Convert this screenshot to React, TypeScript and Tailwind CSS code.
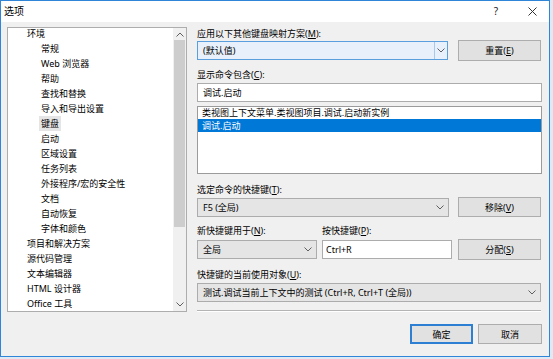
import React from "react";

const treeItems: [string, number][] = [
  ["环境", 0],
  ["常规", 1],
  ["Web 浏览器", 1],
  ["帮助", 1],
  ["查找和替换", 1],
  ["导入和导出设置", 1],
  ["键盘", 1],
  ["启动", 1],
  ["区域设置", 1],
  ["任务列表", 1],
  ["外接程序/宏的安全性", 1],
  ["文档", 1],
  ["自动恢复", 1],
  ["字体和颜色", 1],
  ["项目和解决方案", 0],
  ["源代码管理", 0],
  ["文本编辑器", 0],
  ["HTML 设计器", 0],
  ["Office 工具", 0],
];

const Acc = ({ k }: { k: string }) => (
  <>
    (<span className="underline">{k}</span>)
  </>
);

const Chevron = ({ up = false }: { up?: boolean }) => (
  <svg width="8" height="5" viewBox="0 0 8 5" className="shrink-0">
    <path
      d={up ? "M0.5 4.5 L4 1 L7.5 4.5" : "M0.5 0.5 L4 4 L7.5 0.5"}
      fill="none"
      stroke="#5f5f5f"
      strokeWidth="1"
    />
  </svg>
);

const Combo = ({
  text,
  className = "",
}: {
  text: string;
  className?: string;
}) => (
  <div
    className={`flex h-[19px] items-center border border-[#acacac] bg-[#e5e5e5] pl-[5px] pr-[4px] ${className}`}
  >
    <span className="flex-1 truncate">{text}</span>
    <Chevron />
  </div>
);

const Btn = ({
  children,
  primary = false,
  className = "",
}: {
  children: React.ReactNode;
  primary?: boolean;
  className?: string;
}) => (
  <div
    className={`flex items-center justify-center bg-[#e1e1e1] ${
      primary ? "border-2 border-[#2d7fd3]" : "border border-[#adadad]"
    } ${className}`}
  >
    {children}
  </div>
);

export default function App() {
  return (
    <div className="h-[359px] w-[553px] overflow-hidden bg-[#dfe9f4] font-['Noto_Sans','Noto_Sans_CJK_SC',sans-serif] text-[9px] leading-[13px] text-black">
      <div className="flex h-[357px] w-[550px] flex-col border border-[#2f86d8] bg-[#f0f0f0]">
        {/* title bar */}
        <div className="flex h-[21px] shrink-0 items-center bg-white pl-[3px] text-[10px]">
          <span>选项</span>
          <span className="ml-auto mr-[30px] text-[10px] text-[#222]">?</span>
          <svg width="9" height="9" viewBox="0 0 9 9" className="mr-[12px]">
            <path d="M0.5 0.5 L8.5 8.5 M8.5 0.5 L0.5 8.5" stroke="#333" strokeWidth="1" />
          </svg>
        </div>

        <div className="flex pl-[6px] pt-[5px]">
          {/* tree */}
          <div className="flex h-[285px] w-[180px] shrink-0 overflow-hidden border border-[#adadad] bg-white">
            <div className="flex-1 overflow-hidden">
              <div className="-mt-[2px]">
                {treeItems.map(([name, lvl]) => (
                  <div key={name} className="h-[15px] leading-[15px]">
                    <span
                      className={`inline-block px-[2px] ${
                        lvl === 0 ? "ml-[17px]" : "ml-[31px]"
                      } ${name === "键盘" ? "bg-[#e5e5e5]" : ""}`}
                    >
                      {name}
                    </span>
                  </div>
                ))}
              </div>
            </div>
            <div className="flex w-[13px] flex-col bg-[#f0f0f0]">
              <div className="flex h-[12px] items-center justify-center">
                <Chevron up />
              </div>
              <div className="mx-[1px] h-[187px] bg-[#cdcdcd]" />
              <div className="flex-1" />
              <div className="mb-[1px] flex h-[12px] items-center justify-center">
                <Chevron />
              </div>
            </div>
          </div>

          {/* right panel */}
          <div className="ml-[10px] flex w-[345px] flex-col">
            <div className="h-[13px]">
              应用以下其他键盘映射方案<Acc k="M" />:
            </div>
            <div className="flex h-[21px] items-start">
              <div className="mt-[1px] flex h-[19px] w-[251px] items-center border border-[#5b9ede] bg-[#e8f1fb]">
                <span className="flex-1 pl-[5px]">(默认值)</span>
                <div className="flex h-full w-[13px] items-center justify-center border-l border-[#a9c9ea]">
                  <Chevron />
                </div>
              </div>
              <Btn className="ml-[10px] h-[21px] w-[83px]">
                重置<Acc k="E" />
              </Btn>
            </div>

            <div className="mt-[7px] h-[13px]">
              显示命令包含<Acc k="C" />:
            </div>
            <div className="mt-[2px] flex h-[19px] items-center border border-[#acacac] bg-white pl-[5px]">
              调试.启动
            </div>
            <div className="mt-[4px] h-[68px] border border-[#9b9b9b] bg-white">
              <div className="h-[12px] pl-[4px] leading-[12px]">
                类视图上下文菜单.类视图项目.调试.启动新实例
              </div>
              <div className="h-[13px] bg-[#0078d7] pl-[4px] text-white">调试.启动</div>
            </div>

            <div className="mt-[9px] h-[13px]">
              选定命令的快捷键<Acc k="T" />:
            </div>
            <div className="mt-[1px] flex h-[20px] items-start">
              <Combo text="F5 (全局)" className="mt-[1px] w-[252px]" />
              <Btn className="ml-[9px] h-[20px] w-[83px]">
                移除<Acc k="V" />
              </Btn>
            </div>

            <div className="mt-[7px] flex h-[13px]">
              <div className="w-[125px]">
                新快捷键用于<Acc k="N" />:
              </div>
              <div>
                按快捷键<Acc k="P" />:
              </div>
            </div>
            <div className="mt-[2px] flex h-[21px] items-start">
              <Combo text="全局" className="mt-[1px] w-[120px]" />
              <div className="ml-[5px] mt-[1px] flex h-[19px] w-[130px] items-center border border-[#acacac] bg-white pl-[3px]">
                Ctrl+R
              </div>
              <Btn className="ml-[6px] h-[21px] w-[83px]">
                分配<Acc k="S" />
              </Btn>
            </div>

            <div className="mt-[8px] h-[13px]">
              快捷键的当前使用对象<Acc k="U" />:
            </div>
            <Combo
              text="测试.调试当前上下文中的测试 (Ctrl+R, Ctrl+T (全局))"
              className="mt-[2px] w-[344px]"
            />

            <div className="mt-[8px] h-[2px] w-[344px] border-t border-[#b4b4b4] border-b border-b-white" />

            <div className="mt-[12px] flex justify-end pr-[0px]">
              <Btn primary className="h-[20px] w-[63px]">
                确定
              </Btn>
              <Btn className="ml-[5px] h-[20px] w-[64px]">取消</Btn>
            </div>
          </div>
        </div>
      </div>
    </div>
  );
}
